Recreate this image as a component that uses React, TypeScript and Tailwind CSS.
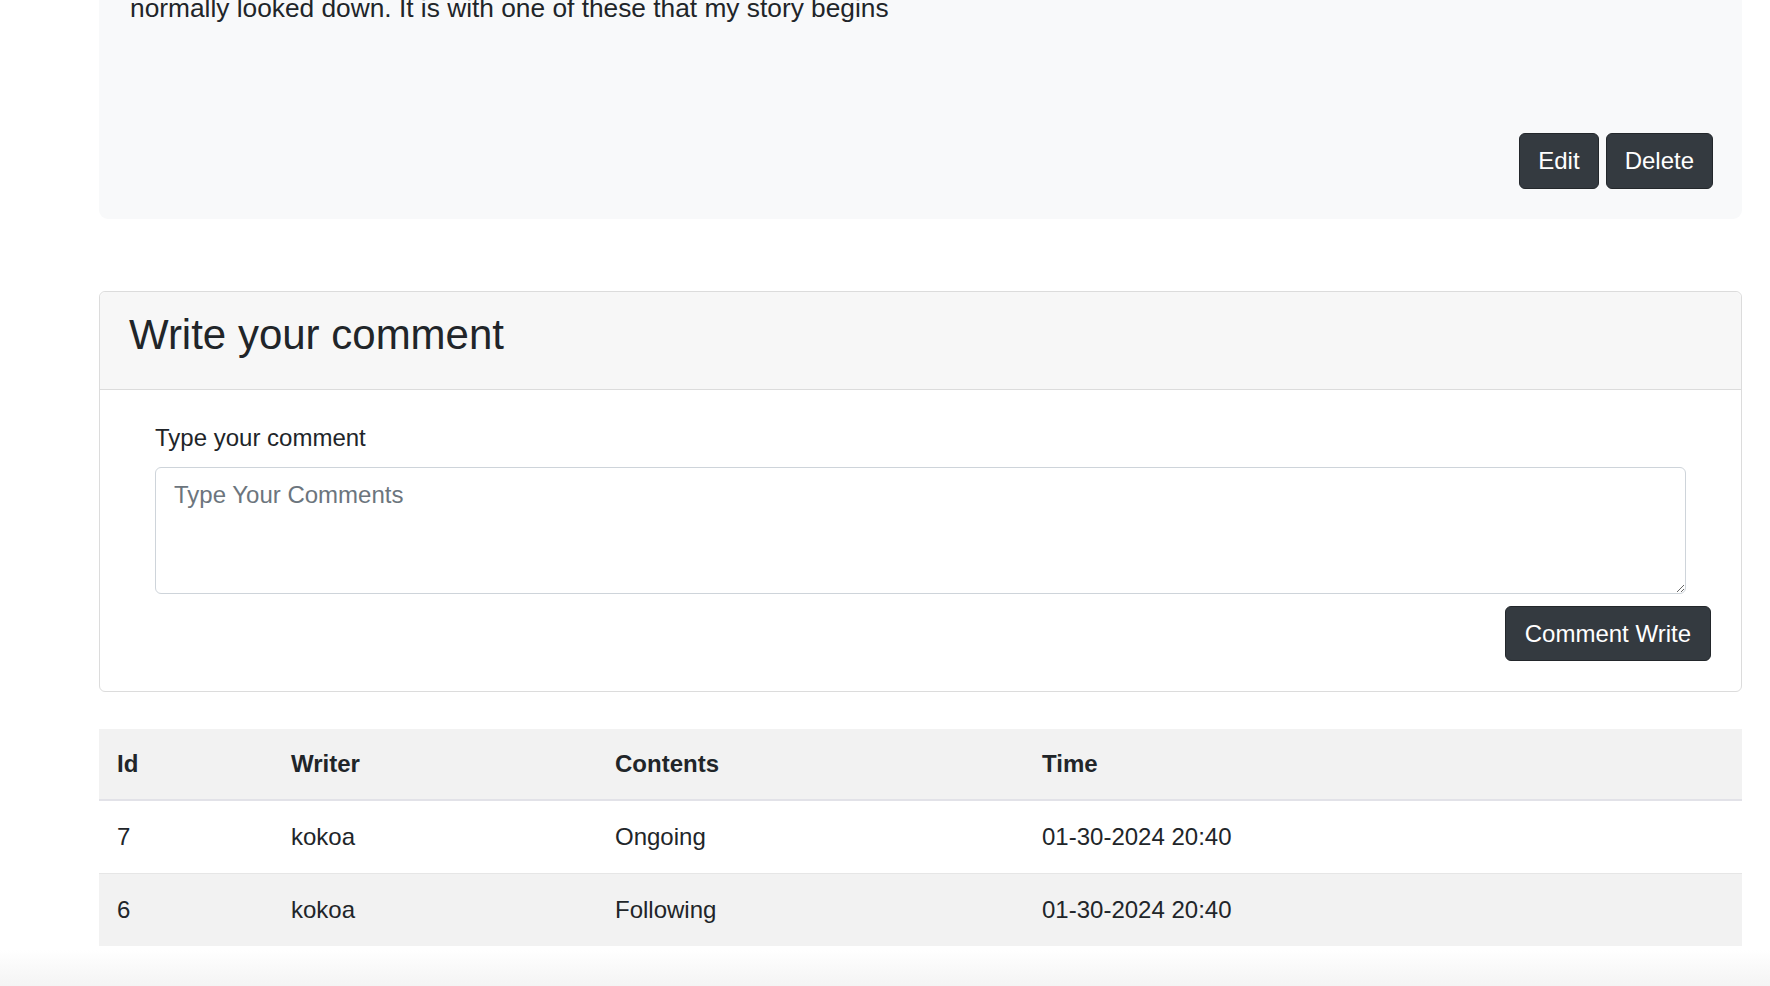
import React from "react";

const rows = [
  { id: 7, writer: "kokoa", contents: "Ongoing", time: "01-30-2024 20:40" },
  { id: 6, writer: "kokoa", contents: "Following", time: "01-30-2024 20:40" },
];

export default function App() {
  return (
    <div
      className="relative min-h-[986px] w-full overflow-hidden bg-white text-[#212529]"
      style={{ fontFamily: '"Liberation Sans", Arial, Helvetica, sans-serif' }}
    >
      <div className="ml-[99px] w-[1643px]">
        {/* Post panel */}
        <div className="rounded-b-[9px] bg-[#f8f9fa] pl-[31px] pr-[29px] pb-[30px]">
          <p className="-mt-[10px] text-[26.3px] leading-[36px]">
            normally looked down. It is with one of these that my story begins
          </p>
          <div className="mt-[107px] flex justify-end gap-[7px]">
            <button className="h-[56px] rounded-[6px] border border-[#23272b] bg-[#343a40] px-[18px] text-[24px] leading-[36px] text-white">
              Edit
            </button>
            <button className="h-[56px] rounded-[6px] border border-[#23272b] bg-[#343a40] px-[18px] text-[24px] leading-[36px] text-white">
              Delete
            </button>
          </div>
        </div>

        {/* Comment card */}
        <div className="mt-[72px] rounded-[6px] border border-[#dcdcdc]">
          <div className="flex h-[98px] items-start rounded-t-[6px] border-b border-[#dcdcdc] bg-[#f7f7f7] pl-[29px] pt-[18px]">
            <h3 className="text-[42px] leading-[50px] font-medium">Write your comment</h3>
          </div>
          <div className="px-[30px] pt-[30px] pb-[30px]">
            <div className="px-[25px]">
              <label className="block text-[24px] leading-[36px]">Type your comment</label>
              <textarea
                className="mt-[11px] block h-[127px] w-full rounded-[6px] border border-[#ced4da] px-[18px] py-[9px] text-[24px] leading-[36px] outline-none placeholder:text-[#6c757d]"
                placeholder="Type Your Comments"
              />
            </div>
            <div className="mt-[12px] flex justify-end">
              <button className="h-[55px] rounded-[6px] border border-[#23272b] bg-[#343a40] px-[19px] text-[24px] leading-[36px] text-white">
                Comment Write
              </button>
            </div>
          </div>
        </div>

        {/* Comments table */}
        <table className="mt-[37px] w-full border-collapse text-[24px] leading-[36px]">
          <colgroup>
            <col className="w-[174px]" />
            <col className="w-[324px]" />
            <col className="w-[427px]" />
            <col />
          </colgroup>
          <thead>
            <tr className="border-b-2 border-[#e2e2e8] bg-[#f2f2f2]">
              <th className="px-[18px] py-[17px] text-left font-bold">Id</th>
              <th className="px-[18px] py-[17px] text-left font-bold">Writer</th>
              <th className="px-[18px] py-[17px] text-left font-bold">Contents</th>
              <th className="px-[18px] py-[17px] text-left font-bold">Time</th>
            </tr>
          </thead>
          <tbody>
            {rows.map((r, i) => (
              <tr
                key={r.id}
                className={
                  i % 2 === 0
                    ? "border-b border-[#e6e6e6] bg-white"
                    : "bg-[#f2f2f2]"
                }
              >
                <td className="px-[18px] py-[18px]">{r.id}</td>
                <td className="px-[18px] py-[18px]">{r.writer}</td>
                <td className="px-[18px] py-[18px]">{r.contents}</td>
                <td className="px-[18px] py-[18px]">{r.time}</td>
              </tr>
            ))}
          </tbody>
        </table>
      </div>

      {/* subtle bottom fade overlay */}
      <div className="pointer-events-none absolute bottom-0 left-0 h-[36px] w-full bg-gradient-to-b from-transparent to-[#f4f4f4]" />
    </div>
  );
}
